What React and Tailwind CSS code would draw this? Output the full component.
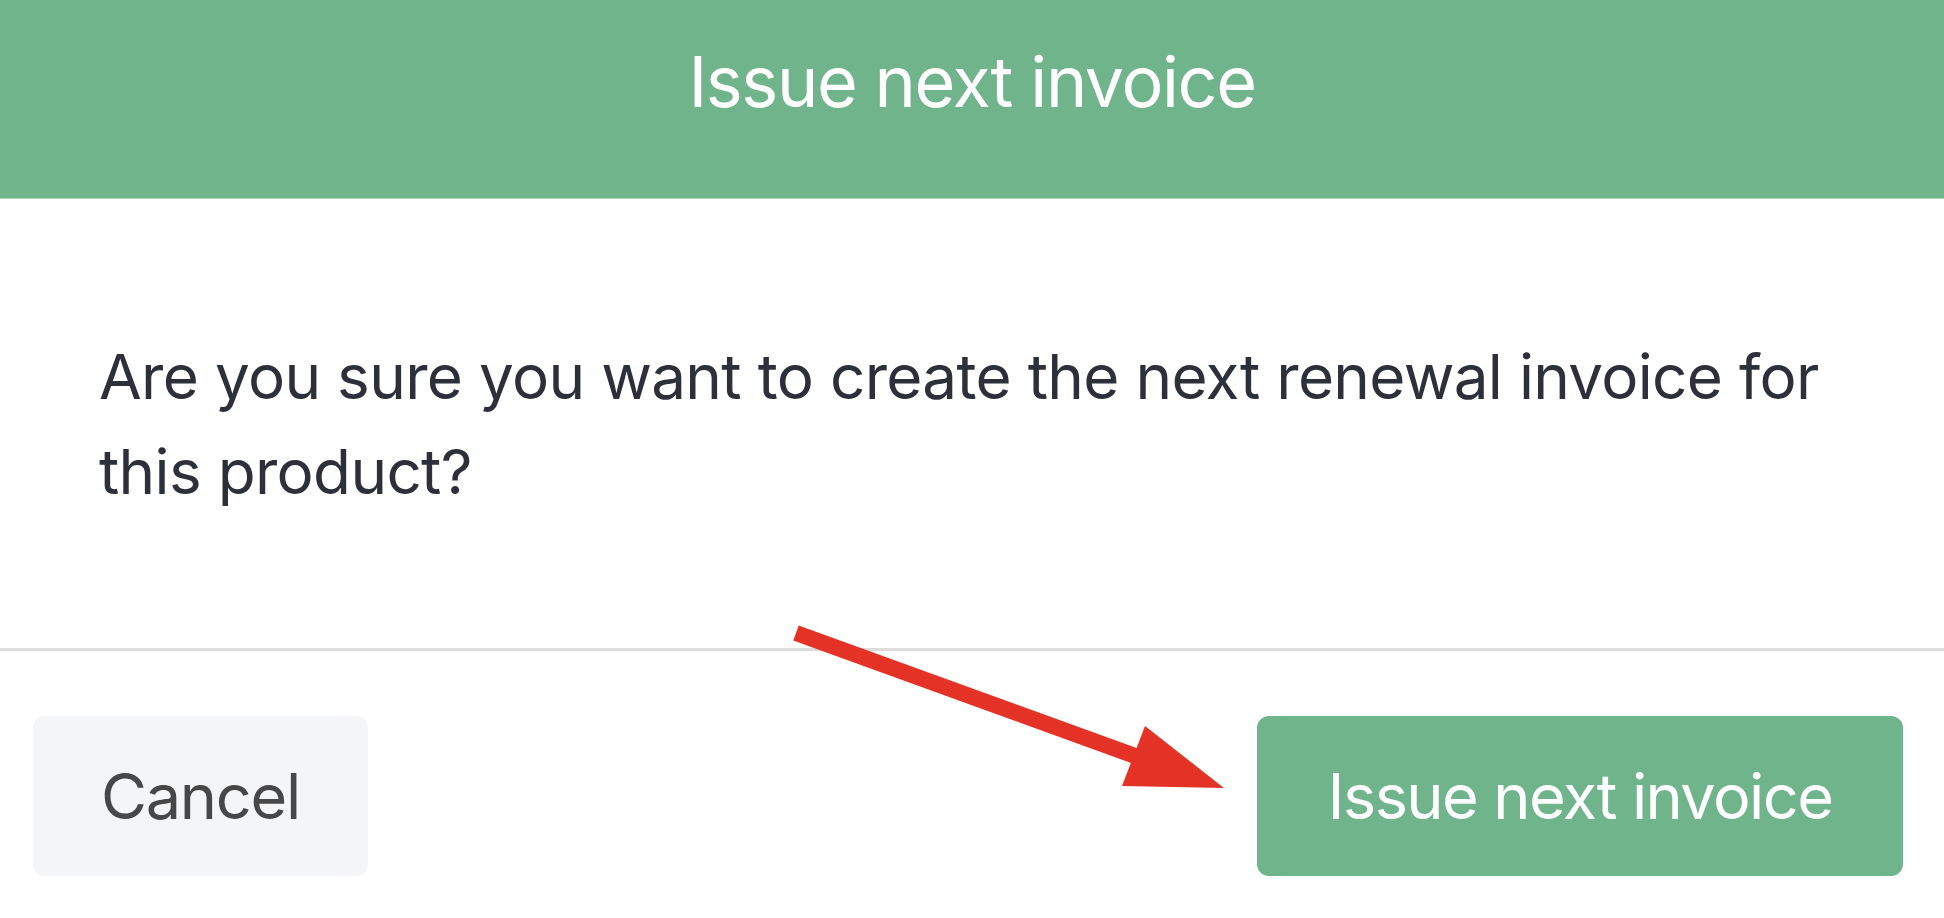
export default function App() {
  return (
    <div className="relative w-[1944px] h-[918px] bg-white overflow-hidden font-['Inter',sans-serif] flex flex-col">
      <header className="h-[199px] shrink-0 bg-[#70b48b] border-b border-[#a9d4b8] flex justify-center pt-[42px]">
        <h1 className="text-white text-[70px] leading-[80px] font-normal tracking-[-0.02em]">Issue next invoice</h1>
      </header>
      <div className="pl-[99px] pr-[60px] pt-[130px] pb-[129px] border-b-[3px] border-[#dcdcdc]">
        <p className="text-[#2b303b] text-[62px] leading-[95px] tracking-[-0.011em]">
          Are you sure you want to create the next renewal invoice for
          <br />
          this product?
        </p>
      </div>
      <div className="flex justify-between items-start pl-[33px] pr-[41px] pt-[65px]">
        <button className="w-[335px] h-[160px] rounded-[12px] bg-[#f4f5f7] text-[#474747] text-[63px] tracking-[-0.02em] flex items-center justify-center">
          Cancel
        </button>
        <button className="w-[646px] h-[160px] rounded-[12px] bg-[#70b48b] text-white text-[63px] tracking-[-0.025em] flex items-center justify-center">
          Issue next invoice
        </button>
      </div>
      <svg className="absolute inset-0 pointer-events-none" width="1944" height="918" viewBox="0 0 1944 918">
        <line x1="796" y1="633" x2="1138" y2="757" stroke="#e53226" strokeWidth="16" />
        <polygon points="1145,726 1122,786 1224,788" fill="#e53226" />
      </svg>
    </div>
  );
}
